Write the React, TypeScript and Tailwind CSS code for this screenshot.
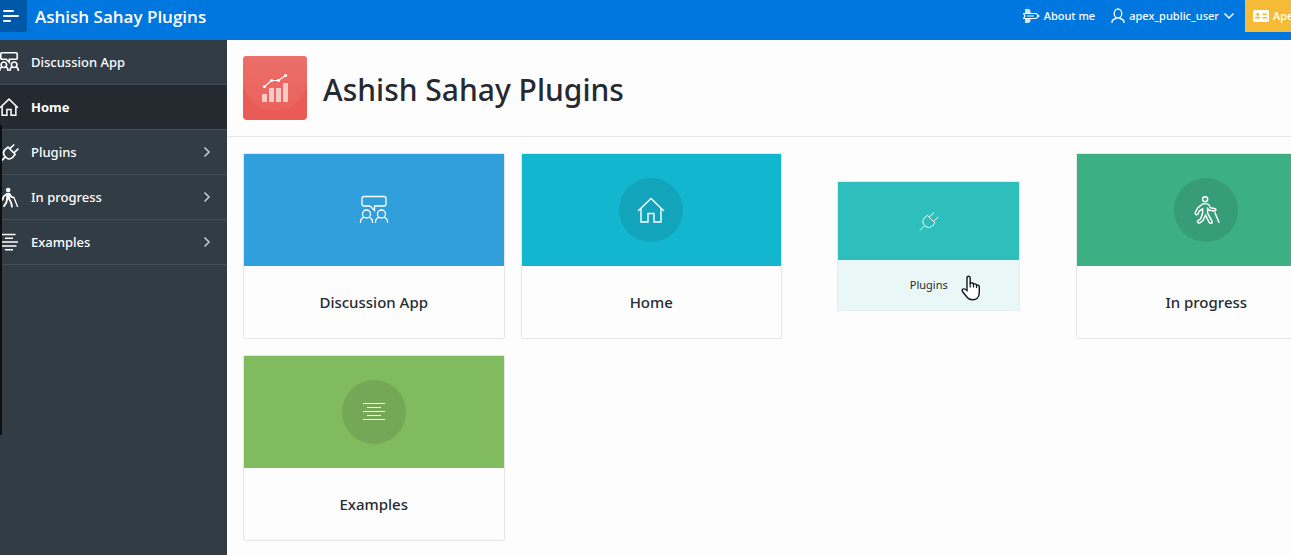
import type { ReactNode } from "react";

type IconProps = { className?: string; weight?: number };

function Glyph({ className = "", weight = 1.5, children }: IconProps & { children: ReactNode }) {
  return (
    <svg
      viewBox="0 0 32 32"
      className={`shrink-0 ${className}`}
      fill="none"
      stroke="currentColor"
      strokeWidth={weight}
      aria-hidden="true"
    >
      {children}
    </svg>
  );
}

function DiscussionIcon(props: IconProps) {
  return (
    <Glyph {...props}>
      <path d="M6 2.500h20q2 0 2 2v5.500q0 2-2 2h-9.500v4.500l-4.500-4.500H6q-2 0-2-2v-5.500q0-2 2-2Z" />
      <circle cx="8.500" cy="20" r="4" />
      <circle cx="23.500" cy="20" r="4" />
      <path d="M2.500 29v-1.500q0-3 3.500-4.200M14.500 29v-1.500q0-3-3.500-4.200M17.500 29v-1.500q0-3 3.500-4.200M29.500 29v-1.500q0-3-3.500-4.200" />
    </Glyph>
  );
}

function HomeIcon(props: IconProps) {
  return (
    <Glyph {...props}>
      <path d="M3 17 16 4.500l13 12.500M6 14.500V28h7v-8.500h6V28h7V14.500" />
    </Glyph>
  );
}

function PlugIcon(props: IconProps) {
  return (
    <Glyph {...props}>
      <path d="M13.500 7 25.500 19l-4 5q-5.500 5-10.500 1l-3.500-3.500q-3.500-5 .5-10ZM16.500 9.500 24 2.500M23.500 16.500 31 9.500M9 23.500 1.500 31" />
    </Glyph>
  );
}

function WalkIcon({ solid, ...props }: IconProps & { solid?: boolean }) {
  if (solid) {
    return (
      <Glyph {...props}>
        <circle cx="14" cy="4.500" r="3.500" fill="currentColor" stroke="none" />
        <path d="M14 9v10" strokeWidth="6" />
        <path d="M12.500 18l-1.500 6-4 6M15.500 18l3 6 1.500 7M12 10.500l-5 4-2 6M16 10.500l3 4.500 5 2" strokeWidth="2.800" />
        <path d="m23.500 18 5 12.500" strokeWidth="2" />
      </Glyph>
    );
  }
  return (
    <Glyph {...props}>
      <circle cx="15" cy="3.800" r="2.900" />
      <path d="M12 9h5q1.800 0 2.600 1.600l1.400 2.900 4.700.7q1.800.3 1.600 1.700-.3 1.400-2 1.200l-5.500-.7-2-2v5.200l5 9q.8 2.300-1.300 2.600-1.400 0-2-1.200l-4-8-3 6-3.400 2.600q-2.300.8-2.900-.8-.2-1.100.9-1.800l2.700-1.900 2.300-6v-5.500l-3.500 2.300-2 4q-1.500 1.300-2.700-.2-.5-1 .1-2.200l2.200-4.500Z" />
      <path d="m26 18.500 5 12" />
    </Glyph>
  );
}

function LinesIcon() {
  return (
    <svg viewBox="0 0 22 18" className="h-[18px] w-[22px]" stroke="currentColor" strokeWidth="1" aria-hidden="true">
      <path d="M0 .5h22M4 4.500h14M0 8.500h22M4 12.500h14M0 16.500h22" />
    </svg>
  );
}

function SidebarLinesIcon() {
  return (
    <svg viewBox="0 0 18 18" className="size-[18px]" stroke="currentColor" strokeWidth="1.500" aria-hidden="true">
      <path d="M1.500 1.500h14M5 5.300h8M0 9.100h18M1.500 13h15M5 16.700h8" />
    </svg>
  );
}

function Chevron({ className = "" }: { className?: string }) {
  return (
    <svg viewBox="0 0 12 12" className={className} fill="none" stroke="currentColor" strokeWidth="1.500" aria-hidden="true">
      <path d="m3.500 1.500 4.500 4.500-4.500 4.500" />
    </svg>
  );
}

const sideItems = [
  { label: "Discussion App", icon: <DiscussionIcon className="size-[22px]" weight={2.4} />, expandable: false, current: false },
  { label: "Home", icon: <HomeIcon className="size-[22px]" weight={2.2} />, expandable: false, current: true },
  { label: "Plugins", icon: <PlugIcon className="size-[19px]" weight={2.8} />, expandable: true, current: false },
  { label: "In progress", icon: <WalkIcon className="size-[21px]" solid />, expandable: true, current: false },
  { label: "Examples", icon: <SidebarLinesIcon />, expandable: true, current: false },
];

type CardProps = { label: string; tone: string; disc: string; icon: ReactNode };

function Card({ label, tone, disc, icon }: CardProps) {
  return (
    <a href="#" className="block rounded-xs border border-[#e6e6e6] bg-[#fdfdfd]">
      <span className={`flex h-28 items-center justify-center ${tone}`}>
        <span className={`flex size-16 items-center justify-center rounded-full text-white ${disc}`}>{icon}</span>
      </span>
      <span className="flex h-[72px] items-center justify-center text-[15px] font-medium text-[#262a30]">{label}</span>
    </a>
  );
}

function Pointer() {
  return (
    <svg viewBox="0 0 20 26" className="absolute top-[93px] right-[38px] h-[26px] w-5" aria-hidden="true">
      <path
        d="M6 15.500V3q0-1.800 1.600-1.800T9.200 3v5.200q2.900-.8 3.300.8 2.600-.6 3 1 2.800-.3 2.800 2V17.500q0 4-2.300 6-1.500 1.300-4.300 1.300-3.500 0-5.200-2L2 17.200q-1.600-2-.2-3 1.700-1 4.200 1.300Z"
        fill="#fff"
        stroke="#10131f"
        strokeWidth="1.400"
      />
      <path d="M9.200 8v4.500M12.500 9v3.500M15.500 10v3" stroke="#10131f" strokeWidth="1.200" />
    </svg>
  );
}

function PressedCard() {
  return (
    <a href="#" className="relative block w-[70%] place-self-center border border-[#e4eeee] bg-[#e9f8f7]">
      <span className="flex h-[78px] items-center justify-center bg-[#2ebfbc] text-white">
        <PlugIcon className="size-5" weight={1.5} />
      </span>
      <span className="flex h-[50px] items-center justify-center text-[11px] text-[#262a30]">Plugins</span>
      <Pointer />
    </a>
  );
}

function AppLogo() {
  return (
    <svg viewBox="0 0 64 64" className="size-16 shrink-0 rounded" aria-hidden="true">
      <defs>
        <linearGradient id="logo-shade" x1="0" y1="0" x2="0" y2="1">
          <stop offset="0" stopColor="#ec6f69" />
          <stop offset="1" stopColor="#ea625b" />
        </linearGradient>
      </defs>
      <rect width="64" height="64" fill="#e95b54" />
      <path d="M0 0h64v30Q54 55 32 55T0 30Z" fill="url(#logo-shade)" />
      <g fill="#fff" fillOpacity=".65">
        <path d="M19 38h5v8h-5zM26 32h5v14h-5zM33 32h5v14h-5zM40 27h5v19h-5z" />
      </g>
      <path d="m21.500 30.500 7-6h7l7-5" fill="none" stroke="#fff" strokeWidth="1.200" />
      <g fill="#fff">
        <circle cx="21.500" cy="30.500" r="1.600" />
        <circle cx="28.500" cy="24.500" r="1.600" />
        <circle cx="35.500" cy="24.500" r="1.600" />
        <circle cx="42.500" cy="19.500" r="1.600" />
      </g>
    </svg>
  );
}

function PlaneIcon() {
  return (
    <svg viewBox="0 0 17 16" className="h-4 w-[17px]" fill="none" stroke="currentColor" aria-hidden="true">
      <path d="M2 1h4l1.500 1.500v2L9 6H2Z M2 15h4l1.500-1.500v-2L9 10H2Z" fill="currentColor" fillOpacity=".8" stroke="none" />
      <path d="M.5 5.500H13l3 2.500-3 2.500H.5L2 8Z" strokeWidth="1.200" />
      <path d="M4 8h7M14 8h2" strokeWidth="1.200" />
    </svg>
  );
}

function UserIcon() {
  return (
    <svg viewBox="0 0 14 16" className="h-4 w-3.5" fill="none" stroke="currentColor" strokeWidth="1.300" aria-hidden="true">
      <ellipse cx="7" cy="5.500" rx="3.800" ry="4.500" />
      <path d="M1 15v-1q0-2.500 4-3.500V9M13 15v-1q0-2.500-4-3.500V9" />
    </svg>
  );
}

function IdCardIcon() {
  return (
    <svg viewBox="0 0 16 12" className="h-3 w-4 shrink-0" aria-hidden="true">
      <rect width="16" height="12" rx="1.500" fill="#fff" />
      <g fill="#f5ba36">
        <circle cx="4.800" cy="4.200" r="1.500" />
        <path d="M2 8.500q0-2 2.800-2t2.800 2ZM9.500 3.500H14V5H9.500zM9.500 7H14v1.500H9.500z" />
      </g>
    </svg>
  );
}

export default function App() {
  return (
    <div className="flex min-h-screen flex-col overflow-x-clip bg-[#fdfdfd] font-['Noto_Sans','Open_Sans',sans-serif]">
      <header className="flex h-10 items-start bg-[#0076df] text-white">
        <button type="button" aria-label="Toggle navigation" className="flex h-8 w-[27px] items-center rounded-br-xs bg-[#0059a8] pl-[3px]">
          <svg viewBox="0 0 16 14" className="h-3.5 w-4" stroke="#fff" strokeWidth="2" strokeLinecap="round" aria-hidden="true">
            <path d="M1 2h9M1 7h14M1 12h6" />
          </svg>
        </button>
        <a href="#" className="ml-2 font-['Open_Sans','Noto_Sans',sans-serif] text-[17px] leading-[34px] font-semibold whitespace-nowrap">
          Ashish Sahay Plugins
        </a>
        <nav aria-label="Account" className="-mr-[30px] ml-auto flex h-8 items-center text-[11px] font-medium whitespace-nowrap">
          <a href="#" className="flex items-center gap-1">
            <PlaneIcon />
            About me
          </a>
          <button type="button" className="ml-4 flex items-center gap-1">
            <UserIcon />
            apex_public_user
            <Chevron className="size-3 rotate-90" />
          </button>
          <a href="#" className="ml-2.5 flex h-8 w-[76px] items-center gap-1 bg-[#f5ba36] pl-2">
            <IdCardIcon />
            Apex
          </a>
        </nav>
      </header>
      <div className="flex grow">
        <aside className="relative w-[227px] shrink-0 bg-[#323c45] text-[13px] text-white">
          <nav aria-label="Main">
            <ul>
              {sideItems.map((item) => (
                <li key={item.label} className={item.current ? "bg-[#252930] font-bold" : "font-medium"}>
                  <a href="#" className="flex h-[45px] items-center border-b border-[#444e58] pr-3.5">
                    <span className="flex w-[31px] shrink-0 items-center">
                      <span className="-ml-px flex w-5 justify-center">{item.icon}</span>
                    </span>
                    <span className="pt-0.5">{item.label}</span>
                    {item.expandable && <Chevron className="ml-auto size-3 text-[#c9cdd1]" />}
                  </a>
                </li>
              ))}
            </ul>
          </nav>
          <div className="absolute top-[85px] left-0 h-[310px] w-0.5 bg-[#0c0e10]" />
        </aside>
        <main className="min-w-0 grow">
          <div className="flex items-center gap-4 border-b border-[#e6e6e6] p-4">
            <AppLogo />
            <h1 className="pt-1 text-3xl font-medium text-[#262a30]">Ashish Sahay Plugins</h1>
          </div>
          <div className="-mr-[46px] grid grid-cols-4 gap-4 py-4 pl-4">
            <Card label="Discussion App" tone="bg-[#309fdb]" disc="bg-transparent" icon={<DiscussionIcon className="size-8" weight={1.3} />} />
            <Card label="Home" tone="bg-[#13b6cf]" disc="bg-[#12a4ba]" icon={<HomeIcon className="size-8" weight={1.4} />} />
            <PressedCard />
            <Card label="In progress" tone="bg-[#3caf85]" disc="bg-[#369d77]" icon={<WalkIcon className="size-7" weight={1.7} />} />
            <Card label="Examples" tone="bg-[#81bb5f]" disc="bg-[#74a856]" icon={<LinesIcon />} />
          </div>
        </main>
      </div>
    </div>
  );
}
